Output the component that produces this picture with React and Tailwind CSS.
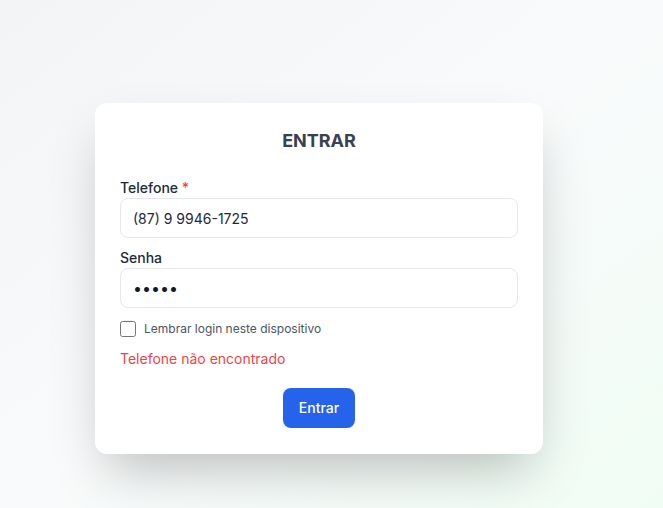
import React, { useState } from 'react';

export default function App() {
    const [phone, setPhone] = useState('(87) 9 9946-1725');
    const [password, setPassword] = useState('12345');
    const [remember, setRemember] = useState(false);

    return (
        <div className="min-h-screen w-full bg-gradient-to-br from-gray-100 via-gray-50 to-green-50 pt-[103px] pl-[95px] font-['Inter','Noto_Sans',sans-serif]">
            <form
                className="w-[448px] bg-white rounded-xl shadow-2xl px-[25px] pt-6 pb-[26px]"
                onSubmit={(e) => e.preventDefault()}
            >
                <h2 className="text-lg font-bold text-[#374151] text-center mb-[23px]">ENTRAR</h2>

                <label className="block text-sm font-medium text-gray-800">
                    Telefone <span className="text-[#ef4444]">*</span>
                </label>
                <input
                    type="text"
                    value={phone}
                    onChange={(e) => setPhone(e.target.value)}
                    className="w-full h-10 px-3 text-sm text-gray-800 border border-gray-200 rounded-lg outline-none"
                />

                <label className="block mt-2.5 text-sm font-medium text-gray-800">Senha</label>
                <input
                    type="password"
                    value={password}
                    onChange={(e) => setPassword(e.target.value)}
                    className="w-full h-10 px-3 text-base text-gray-900 border border-gray-200 rounded-lg outline-none"
                />

                <label className="flex items-center gap-2 mt-[13px] text-xs text-gray-600">
                    <input
                        type="checkbox"
                        checked={remember}
                        onChange={(e) => setRemember(e.target.checked)}
                        className="w-4 h-4 rounded border-gray-400"
                    />
                    Lembrar login neste dispositivo
                </label>

                <p className="mt-3 text-sm text-[#ef4444]">Telefone não encontrado</p>

                <div className="flex justify-center mt-[19px]">
                    <button
                        type="submit"
                        className="h-10 px-4 bg-[#2563eb] hover:bg-[#1d4ed8] text-white text-sm font-medium rounded-lg"
                    >
                        Entrar
                    </button>
                </div>
            </form>
        </div>
    );
}
